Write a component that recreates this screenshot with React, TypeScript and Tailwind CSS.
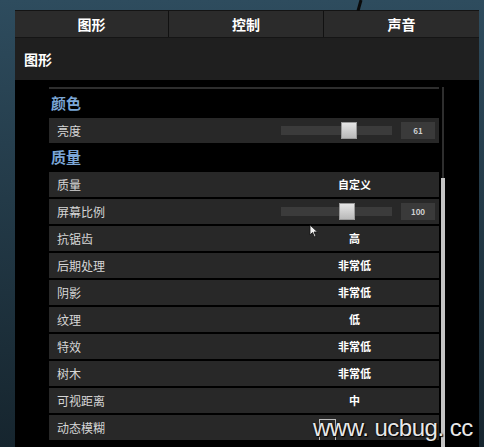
import React from 'react';

type Row = {
    label: string;
    value?: string;
    slider?: { display: string; thumb: number };
    checkbox?: boolean;
};

const quality: Row[] = [
    { label: '质量', value: '自定义' },
    { label: '屏幕比例', slider: { display: '100', thumb: 58 } },
    { label: '抗锯齿', value: '高' },
    { label: '后期处理', value: '非常低' },
    { label: '阴影', value: '非常低' },
    { label: '纹理', value: '低' },
    { label: '特效', value: '非常低' },
    { label: '树木', value: '非常低' },
    { label: '可视距离', value: '中' },
    { label: '动态模糊', checkbox: true },
];

const font = { fontFamily: '"Noto Sans CJK SC", "Noto Sans", sans-serif' };

function Slider({ display, thumb }: { display: string; thumb: number }) {
    return (
        <div className="flex items-center h-full">
            <div className="relative ml-[11px] w-[111px] h-[9px] bg-[#3b3b3b]">
                <div
                    className="absolute top-[-4px] w-[16px] h-[17px] bg-gradient-to-b from-[#e6e6e6] to-[#b9b9b9] border border-[#9a9a9a]"
                    style={{ left: thumb }}
                />
            </div>
            <div className="ml-[9px] w-[34px] h-[17px] bg-[#3a3a3a] flex items-center justify-center text-[8px] font-bold text-[#d0d0d0]">
                {display}
            </div>
        </div>
    );
}

function SettingRow({ row }: { row: Row }) {
    return (
        <div className="flex h-[25px] bg-[#282828] items-center">
            <div className="w-[221px] pl-[8px] text-[12px] text-[#d6d6d6] leading-none">{row.label}</div>
            <div className="w-[169px] h-full">
                {row.slider ? (
                    <Slider display={row.slider.display} thumb={row.slider.thumb} />
                ) : row.checkbox ? (
                    <div className="h-full flex items-end pl-[49px]">
                        <div className="w-[17px] h-[21px] border border-[#bdbdbd] border-b-0" />
                    </div>
                ) : (
                    <div className="h-full flex items-center justify-center text-[11px] font-bold text-white">
                        {row.value}
                    </div>
                )}
            </div>
        </div>
    );
}

export default function App() {
    return (
        <div
            className="relative w-[484px] h-[447px] overflow-hidden bg-gradient-to-b from-[#2e4c5e] to-[#16252e] pl-[15px] pr-[5px] pt-[10px]"
            style={font}
        >
            <svg className="absolute left-[352px] top-0" width="12" height="11" viewBox="0 0 12 11">
                <line x1="9" y1="0" x2="6" y2="11" stroke="#0a0a0a" strokeWidth="3" />
            </svg>
            <div className="flex flex-col h-full">
                <div className="flex h-[27px] bg-[#2b2b2b] border-t border-[#141414]">
                    <div className="w-[154px] flex items-center justify-center text-[14px] font-bold text-white border-r border-[#111]">图形</div>
                    <div className="w-[155px] flex items-center justify-center text-[14px] font-bold text-white border-r border-[#111]">控制</div>
                    <div className="flex-1 flex items-center justify-center text-[14px] font-bold text-white">声音</div>
                </div>
                <div className="h-[43px] bg-[#1f1f1f] border-t border-[#151515] flex items-center pl-[9px] text-[14px] font-bold text-white">
                    图形
                </div>
                <div className="flex-1 bg-black flex pl-[34px]">
                    <div className="w-[390px] pt-[7px]">
                        <div className="h-[2px] bg-[#2e2e2e]" />
                        <div className="h-[29px] flex items-center pl-[2px] text-[15px] font-bold text-[#7ba6d6]">颜色</div>
                        <div className="flex h-[25px] bg-[#282828] items-center">
                            <div className="w-[221px] pl-[8px] text-[12px] text-[#d6d6d6] leading-none">亮度</div>
                            <div className="w-[169px] h-full">
                                <Slider display="61" thumb={60} />
                            </div>
                        </div>
                        <div className="h-[29px] flex items-center pl-[2px] text-[15px] font-bold text-[#7ba6d6]">质量</div>
                        <div className="flex flex-col gap-[2px]">
                            {quality.map((row) => (
                                <SettingRow key={row.label} row={row} />
                            ))}
                        </div>
                    </div>
                    <div className="ml-[2px] pt-[7px] flex flex-col w-[4px]">
                        <div className="h-[91px] w-[2px] ml-[1px] bg-[#2e2e2e]" />
                        <div className="flex-1 bg-[#c4c4c4]" />
                    </div>
                </div>
            </div>
            <svg className="absolute left-[309px] top-[224px]" width="10" height="14" viewBox="0 0 10 14">
                <path d="M1 1 L1 11 L3.5 8.5 L5.5 13 L7 12.3 L5 8 L8.5 8 Z" fill="#f2f2f2" stroke="#111" strokeWidth="0.8" />
            </svg>
            <div
                className="absolute left-[313px] top-[416px] text-[24px] leading-none text-[#e8e8e8] whitespace-nowrap tracking-[-0.5px]"
                style={{ fontFamily: '"Liberation Sans", Arial, sans-serif', textShadow: '0 0 2px #000, 1px 1px 1px #000' }}
            >
                www. ucbug. cc
            </div>
        </div>
    );
}
